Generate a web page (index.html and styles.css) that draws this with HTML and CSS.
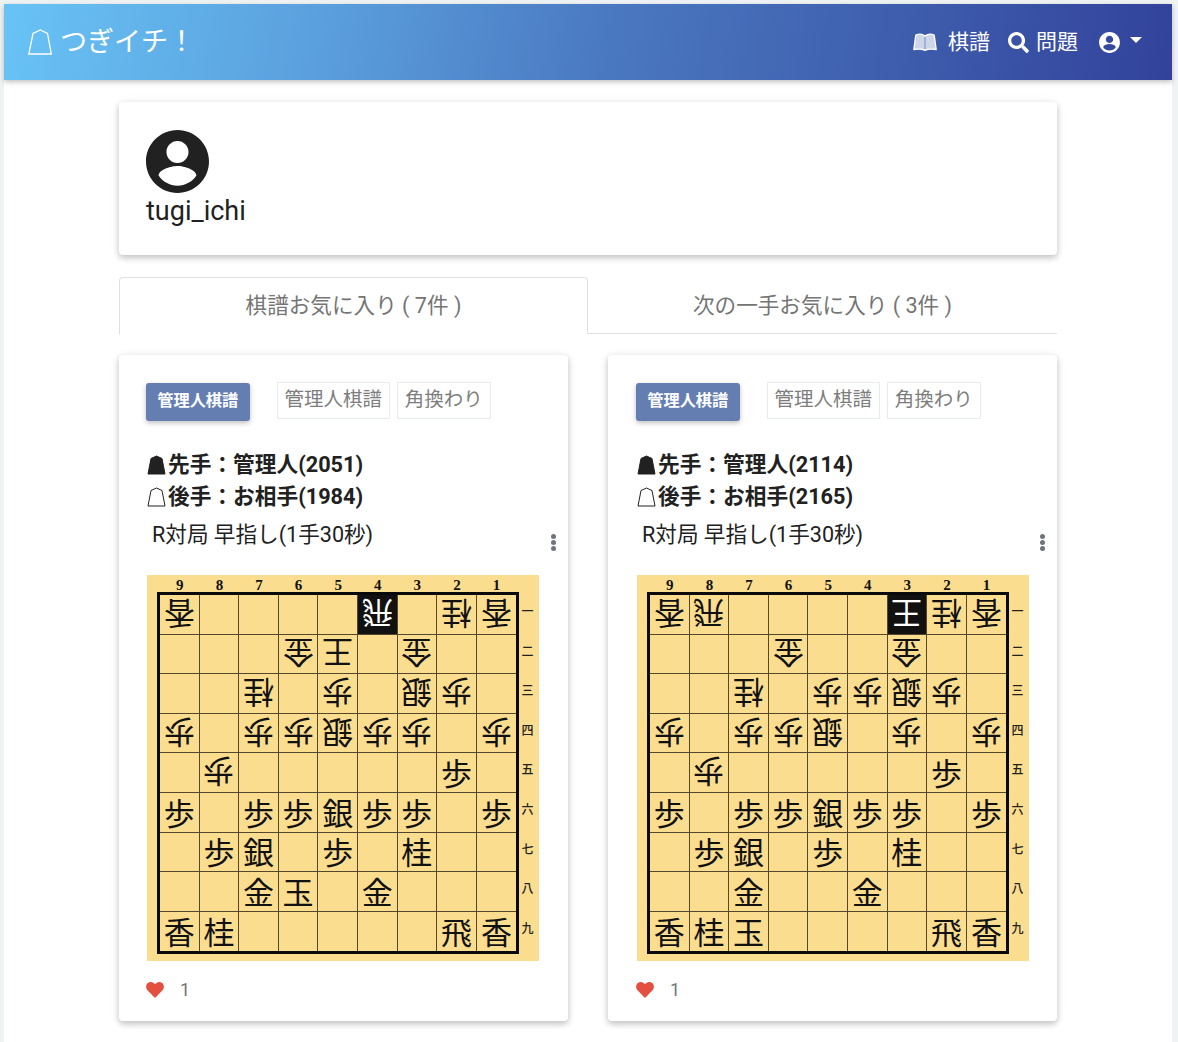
FILE: index.html
```html
<!DOCTYPE html>
<html>
<head>
    <meta charset="UTF-8">
    <title>つぎイチ！</title>
    <link rel="stylesheet" href="styles.css">
</head>
<body>
    <div id="app">
        <header class="navbar">
            <a class="brand">
                <svg class="koma-icon" viewBox="0 0 24 26"><path d="M12.500 1 L19.500 4.500 L23.300 25 L0.800 25 L5 4.500 Z"/></svg>
                <span>つぎイチ！</span>
            </a>
            <nav class="nav-links">
                <a class="nav-item nav-item-book">
                    <svg class="icon-book" viewBox="0 0 24 18"><path fill="#fff" fill-opacity="0.75" stroke="#fff" stroke-width="1.300" stroke-linejoin="round" d="M0.800 16.500 L2.800 2 C6 0.800 9.500 1 12 3 C14.500 1 18 0.800 21.200 2 L23.200 16.500 C19.500 15.800 15 16 12 17.300 C9 16 4.500 15.800 0.800 16.500 Z"/><path fill="none" stroke="#4a6fb8" stroke-width="0.700" d="M12 4 L12 16"/></svg>
                    <span>棋譜</span>
                </a>
                <a class="nav-item nav-item-tight">
                    <svg class="icon-search" viewBox="0 0 512 512"><path fill="#fff" d="M505 442.700 405.300 343c-4.500-4.500-10.600-7-17-7H372c27.600-35.300 44-79.700 44-128C416 93.100 322.900 0 208 0S0 93.100 0 208s93.100 208 208 208c48.300 0 92.700-16.400 128-44v16.300c0 6.400 2.500 12.500 7 17l99.700 99.700c9.400 9.400 24.600 9.400 33.900 0l28.300-28.300c9.400-9.400 9.400-24.600.1-34zM208 336c-70.700 0-128-57.200-128-128 0-70.700 57.200-128 128-128 70.700 0 128 57.200 128 128 0 70.700-57.200 128-128 128z"/></svg>
                    <span>問題</span>
                </a>
                <a class="nav-item nav-user">
                    <svg class="icon-user" viewBox="0 0 24 24"><path fill="#fff" d="M12 2C6.480 2 2 6.480 2 12s4.480 10 10 10 10-4.480 10-10S17.520 2 12 2zm0 3.500c1.930 0 3.500 1.570 3.500 3.500s-1.570 3.500-3.500 3.500-3.500-1.570-3.500-3.500 1.570-3.500 3.500-3.500zm0 14.200c-2.500 0-4.710-1.280-6-3.220.03-1.990 4-3.080 6-3.080s5.970 1.090 6 3.080c-1.290 1.940-3.500 3.220-6 3.220z"/></svg>
                    <span class="caret"></span>
                </a>
            </nav>
        </header>

        <main class="container">
            <section class="card profile">
                <svg class="avatar" viewBox="2 2 20 20"><path fill="#212121" d="M12 2C6.480 2 2 6.480 2 12s4.480 10 10 10 10-4.480 10-10S17.520 2 12 2zm0 3.500c1.930 0 3.500 1.570 3.500 3.500s-1.570 3.500-3.500 3.500-3.500-1.570-3.500-3.500 1.570-3.500 3.500-3.500zm0 14.200c-2.500 0-4.710-1.280-6-3.220.03-1.990 4-3.080 6-3.080s5.970 1.090 6 3.080c-1.290 1.940-3.500 3.220-6 3.220z"/></svg>
                <div class="username">tugi_ichi</div>
            </section>

            <div class="tabs">
                <div class="tab tab-active">棋譜お気に入り ( 7件 )</div>
                <div class="tab">次の一手お気に入り ( 3件 )</div>
            </div>

            <div class="kifu-list" id="kifu-list"></div>
        </main>
    </div>

    <script src="board.js"></script>
</body>
</html>
```

FILE: styles.css
```css
* {
    box-sizing: border-box;
}
html, body {
    height: 100%;
}
body {
    margin: 0;
    padding: 4px 6px 0 4px;
    overflow: hidden;
    background-color: #f0f3f3;
    color: #212121;
    font-family: Roboto, "Noto Sans CJK JP", sans-serif;
}
#app {
    height: 100%;
    background-color: #fff;
}
.navbar {
    display: flex;
    align-items: center;
    justify-content: space-between;
    height: 76px;
    padding: 0 30px 0 24px;
    background: linear-gradient(100deg, #68c3f5 0%, #5a9edd 28%, #4a78c0 52%, #3f5fae 75%, #32429b 100%);
    box-shadow: 0 2px 5px rgba(0,0,0,0.25);
    color: #fff;
}
.brand {
    display: flex;
    align-items: center;
    gap: 8px;
    font-size: 27px;
    font-weight: 400;
}
.brand span {
    padding-bottom: 5px;
}
.koma-icon {
    width: 24px;
    height: 26px;
    fill: none;
    stroke: #fff;
    stroke-width: 1.300;
}
.nav-links {
    display: flex;
    align-items: center;
    gap: 18px;
}
.nav-item {
    display: flex;
    align-items: center;
    gap: 10px;
    font-size: 21px;
}
.nav-item span {
    padding-bottom: 4px;
}
.nav-item-book {
    gap: 11px;
}
.nav-item-tight {
    gap: 7px;
}
.nav-user {
    margin-left: 1px;
    gap: 8px;
}
.icon-book {
    width: 24px;
    height: 18px;
}
.icon-search {
    width: 21px;
    height: 21px;
}
.icon-user {
    width: 25px;
    height: 25px;
}
.nav-item .caret {
    width: 0;
    height: 0;
    margin-bottom: 4px;
    padding: 0;
    border-left: 6.500px solid transparent;
    border-right: 6.500px solid transparent;
    border-top: 6.500px solid #fff;
}
.container {
    width: 938px;
    margin: 0 auto;
    padding-top: 22px;
}
.card {
    border-radius: 4px;
    background-color: #fff;
    box-shadow: 0 3px 6px rgba(0,0,0,0.2), 0 1px 10px rgba(0,0,0,0.08);
}
.profile {
    height: 153px;
    padding: 28px 27px;
}
.avatar {
    display: block;
    width: 63px;
    height: 63px;
}
.username {
    font-size: 27px;
    line-height: 36px;
}
.tabs {
    display: flex;
    margin-top: 22px;
    height: 57px;
}
.tab {
    flex: 1;
    display: flex;
    align-items: center;
    justify-content: center;
    padding-bottom: 4px;
    border-bottom: 1px solid #dee2e6;
    color: #757575;
    font-size: 21.600px;
}
.tab-active {
    flex: none;
    width: 469px;
    padding-bottom: 5px;
    border: 1px solid #dee2e6;
    border-bottom: none;
    border-radius: 4px 4px 0 0;
}
.kifu-list {
    display: flex;
    justify-content: space-between;
    margin-top: 21px;
}
.kifu-card {
    width: 449px;
    height: 666px;
    padding: 28px 28px 0 27px;
}
.kifu-card:last-child {
    padding-left: 28px;
}
.tag-row {
    display: flex;
    align-items: flex-start;
    height: 38px;
}
.btn-kind {
    width: 103.500px;
    height: 38px;
    margin-right: 27px;
    border-radius: 3px;
    background-color: #647eb2;
    box-shadow: 0 2px 5px rgba(0,0,0,0.25);
    color: #fff;
    font-size: 16.200px;
    font-weight: 700;
    line-height: 36px;
    text-align: center;
}
.tag {
    height: 36.700px;
    margin-top: -1px;
    margin-right: 6.700px;
    padding: 0 7px;
    border: 1.500px solid #e6ebf1;
    color: #7d7d7d;
    font-size: 19.500px;
    line-height: 33px;
}
.players {
    margin-top: 28px;
    font-size: 21.700px;
    font-weight: 700;
    line-height: 32px;
}
.player {
    display: flex;
    align-items: center;
    height: 32px;
}
.player-koma {
    width: 19px;
    height: 20px;
    margin: 0 2px 0 1px;
    stroke: #212121;
    stroke-width: 1;
}
.player-koma-black {
    fill: #212121;
}
.player-koma-white {
    fill: none;
}
.game-info {
    display: flex;
    justify-content: space-between;
    margin-top: 6px;
    padding-left: 6px;
    height: 56px;
    font-size: 21.600px;
    line-height: 32px;
}
.menu-dots {
    display: flex;
    flex-direction: column;
    gap: 1px;
    margin: 15px -16px 0 0;
}
.menu-dots i {
    display: block;
    width: 5px;
    height: 5px;
    border-radius: 50%;
    background-color: #6c757d;
}
.board {
    width: 392px;
    height: 386px;
    margin-left: 1px;
    padding: 5px 0 0 13px;
    background-color: #fbdd8f;
}
.board-files {
    display: grid;
    grid-template-columns: repeat(9, 39.600px);
    height: 15px;
    color: #111;
    font-family: "Liberation Serif", serif;
    font-size: 15px;
    font-weight: 700;
    line-height: 11px;
    text-align: center;
}
.board-body {
    display: flex;
}
.board-grid {
    display: grid;
    grid-template-columns: repeat(9, 39.600px);
    grid-template-rows: repeat(9, 39.600px);
    width: 356.400px;
    height: 356.400px;
    outline: 3px solid #0a0a0a;
}
.cell {
    display: flex;
    align-items: center;
    justify-content: center;
    border-right: 1px solid #54472a;
    border-bottom: 1px solid #54472a;
    color: #111;
    font-family: "Noto Sans CJK JP", serif;
    font-size: 31px;
    line-height: 1;
}
.cell:nth-child(9n) {
    border-right: none;
}
.cell:nth-last-child(-n+9) {
    border-bottom: none;
}
.cell span {
    display: block;
    transform: translateY(-1px);
}
.gote span {
    transform: translateY(1px) rotate(180deg);
}
.last-move {
    background-color: #111;
    color: #fff;
}
.board-ranks {
    display: grid;
    grid-template-rows: repeat(9, 39.600px);
    width: 22px;
    color: #222;
    font-family: "Noto Sans CJK JP", serif;
    font-size: 12px;
    font-weight: 500;
    line-height: 32px;
    text-align: center;
}
.fav {
    display: flex;
    align-items: center;
    gap: 16px;
    margin-top: 18px;
    color: #757575;
    font-size: 18px;
}
.heart {
    width: 18px;
    height: 16px;
    fill: #e3503e;
}
```

FILE: board.js
```js
// "v" = gote piece, "*" = last move, "." = empty
const kifuList = [
    {
        sente: "管理人(2051)",
        gote: "お相手(1984)",
        board: [
            "v香 . . . . *v飛 . v桂 v香",
            ". . . v金 v王 . v金 . .",
            ". . v桂 . v歩 . v銀 v歩 .",
            "v歩 . v歩 v歩 v銀 v歩 v歩 . v歩",
            ". v歩 . . . . . 歩 .",
            "歩 . 歩 歩 銀 歩 歩 . 歩",
            ". 歩 銀 . 歩 . 桂 . .",
            ". . 金 玉 . 金 . . .",
            "香 桂 . . . . . 飛 香"
        ]
    },
    {
        sente: "管理人(2114)",
        gote: "お相手(2165)",
        board: [
            "v香 v飛 . . . . *v王 v桂 v香",
            ". . . v金 . . v金 . .",
            ". . v桂 . v歩 v歩 v銀 v歩 .",
            "v歩 . v歩 v歩 v銀 . v歩 . v歩",
            ". v歩 . . . . . 歩 .",
            "歩 . 歩 歩 銀 歩 歩 . 歩",
            ". 歩 銀 . 歩 . 桂 . .",
            ". . 金 . . 金 . . .",
            "香 桂 玉 . . . . 飛 香"
        ]
    }
];

const FILES = ["9", "8", "7", "6", "5", "4", "3", "2", "1"];
const RANKS = ["一", "二", "三", "四", "五", "六", "七", "八", "九"];
const KOMA_PATH = "M9.500 1 L15 3.500 L18 19 L1 19 L4 3.500 Z";

function cellHtml(piece) {
    if (piece === ".") return '<div class="cell"></div>';
    const last = piece[0] === "*";
    if (last) piece = piece.slice(1);
    const gote = piece[0] === "v";
    if (gote) piece = piece.slice(1);
    const cls = "cell" + (gote ? " gote" : "") + (last ? " last-move" : "");
    return `<div class="${cls}"><span>${piece}</span></div>`;
}

function cardHtml(kifu) {
    const cells = kifu.board.join(" ").split(" ").map(cellHtml).join("");
    return `
        <article class="card kifu-card">
            <div class="tag-row">
                <div class="btn-kind">管理人棋譜</div>
                <div class="tag">管理人棋譜</div>
                <div class="tag">角換わり</div>
            </div>
            <div class="players">
                <div class="player"><svg class="player-koma player-koma-black" viewBox="0 0 19 20"><path d="${KOMA_PATH}"/></svg>先手：${kifu.sente}</div>
                <div class="player"><svg class="player-koma player-koma-white" viewBox="0 0 19 20"><path d="${KOMA_PATH}"/></svg>後手：${kifu.gote}</div>
            </div>
            <div class="game-info">
                <span>R対局 早指し(1手30秒)</span>
                <div class="menu-dots"><i></i><i></i><i></i></div>
            </div>
            <div class="board">
                <div class="board-files">${FILES.map(f => `<span>${f}</span>`).join("")}</div>
                <div class="board-body">
                    <div class="board-grid">${cells}</div>
                    <div class="board-ranks">${RANKS.map(r => `<span>${r}</span>`).join("")}</div>
                </div>
            </div>
            <div class="fav">
                <svg class="heart" viewBox="0 0 512 460"><path d="M462 30C407-16 325-8 275 44l-19 20-19-20C186-8 105-16 50 30c-63 54-66 150-10 208l193 199c12 13 33 13 46 0l193-199c56-58 53-154-10-208z"/></svg>
                <span>1</span>
            </div>
        </article>`;
}

document.getElementById("kifu-list").innerHTML = kifuList.map(cardHtml).join("");
```
